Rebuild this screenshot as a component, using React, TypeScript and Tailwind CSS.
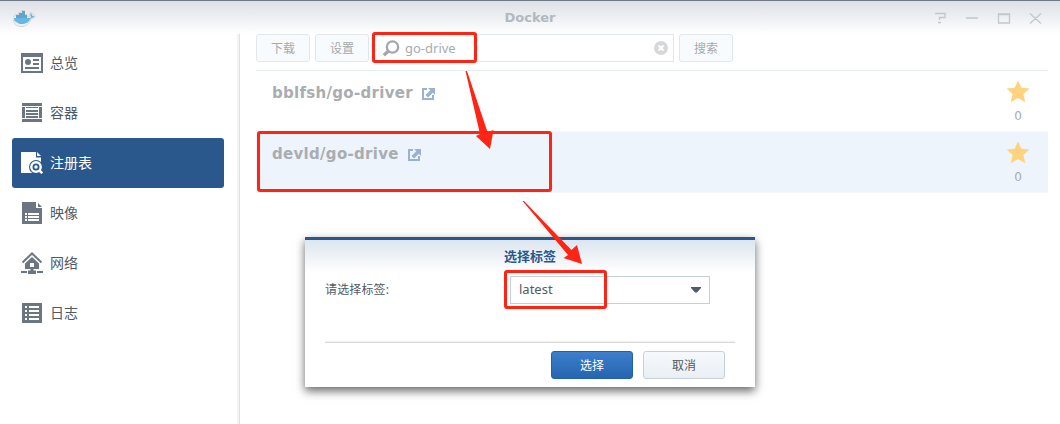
import type { ReactNode } from "react";

const latin = "font-['Noto_Sans','Noto_Sans_CJK_SC',sans-serif]";

function Whale() {
  return (
    <svg width="23" height="18" viewBox="0 0 23 18">
      <path d="M0 7.500L2 6V4.500H5.500V2.500H8V.500H11.500V4.500H14V6.500C15.500 7 16.500 7 17.400 6.200C16 4.500 16.500 3 17.800 2C19 3 19.400 4 19.500 5.200C20.800 4.800 22 5.300 22.500 6C21.500 8 20 8.500 18.500 8.500C16 14 13 16.500 8 16.500C3 16.500 0 13 0 7.500Z" fill="#f2f2f2" stroke="#d3d3d2" strokeWidth="1" />
      <path d="M1 8H15C17 8 18 7.600 18 6.500C17 5 17.200 4 18 3C19 4 19.200 5 19 6H21.500C20.800 7.500 19.500 8 18 8C16 12.500 13 14 8 14C4 14 1 12.500 1 8Z" fill="#66b7e6" />
      <path d="M3 5H14V8H3ZM6 3H12V5H6ZM9 1H12V3H9Z" fill="#62a5cc" />
      <path d="M1 11C4 12 5 13 8 15C5 15.500 2 13.500 1 11Z" fill="#e9f1f4" />
    </svg>
  );
}

function Svg({ children }: { children: ReactNode }) {
  return <svg width="22" height="22" viewBox="0 0 22 22" fill="currentColor">{children}</svg>;
}

const icons = {
  overview: (
    <Svg>
      <path d="M0 1H22V21H0ZM2 5V19H20V5Z" fillRule="evenodd" />
      <circle cx="7" cy="10" r="3" />
      <path d="M12 7H18V9H12ZM12 11H18V13H12ZM4 15H18V17H4Z" />
    </Svg>
  ),
  container: (
    <Svg>
      <path d="M1 1H21V4H1ZM1 5H4V16H1ZM18 5H21V16H18ZM5 5H17V6H5ZM5 8H17V10H5ZM5 11H17V13H5ZM5 14H17V16H5ZM1 17H21V20H1Z" />
    </Svg>
  ),
  registry: (
    <Svg>
      <path d="M0 0H15V5.500H20V21H0Z" />
      <path d="M16 0L20 4H16Z" />
      <path d="M13 21.500H22V14H17Z" fill="#2a588c" />
      <circle cx="15" cy="15" r="7" fill="#2a588c" />
      <circle cx="15" cy="15" r="4.700" fill="none" stroke="currentColor" strokeWidth="2.400" />
      <circle cx="15" cy="15" r="1.700" />
      <path d="M18.500 18.500L21.200 21.200" stroke="currentColor" strokeWidth="2.500" />
    </Svg>
  ),
  image: (
    <Svg>
      <path d="M1 0H15V6H21V22H1Z" />
      <path d="M17 1L21 5H17Z" />
      <path d="M4 11H6V13H4ZM7 11H18V13H7ZM4 14H6V16H4ZM7 14H18V16H7ZM4 17H6V19H4ZM7 17H18V19H7Z" fill="#fff" />
    </Svg>
  ),
  network: (
    <Svg>
      <path d="M1.500 10.500L11 1.500L20.500 10.500" fill="none" stroke="currentColor" strokeWidth="2" />
      <path d="M11 5L18 11.500V17H4V11.500ZM9 11V15H13V11Z" fillRule="evenodd" />
      <path d="M0 19H6V21H0ZM7 18.500H9.500V17H12.500V18.500H15V22H7ZM16 19H22V21H16Z" />
    </Svg>
  ),
  log: (
    <Svg>
      <path d="M1 1H21V21H1Z" />
      <path d="M4 4H6V6H4ZM8 4H18V6H8ZM4 8H6V10H4ZM8 8H18V10H8ZM4 12H6V14H4ZM8 12H18V14H8ZM4 16H6V18H4ZM8 16H18V18H8Z" fill="#fff" />
    </Svg>
  ),
};

const nav = [
  { label: "总览", icon: icons.overview },
  { label: "容器", icon: icons.container },
  { label: "注册表", icon: icons.registry, active: true },
  { label: "映像", icon: icons.image },
  { label: "网络", icon: icons.network },
  { label: "日志", icon: icons.log },
];

const base = "flex h-7 w-[54px] shrink-0 items-center justify-center rounded-[3px] border border-[#e2e7ec] bg-[#f8fbfe] pt-0.5 text-xs text-[#a6a9ad]";

function Row({ name, selected, children }: { name: string; selected?: boolean; children?: ReactNode }) {
  return (
    <div className={`relative flex h-[61px] justify-between border-b ${selected ? "border-[#f3f6f9] bg-[#edf4fc]" : "border-[#f6f8fa]"}`}>
      <div className="flex h-[44px] items-center pl-4">
        <span className="font-['DejaVu_Sans',sans-serif] text-[15px] font-bold tracking-[0.3px] text-[#a9adb1]">{name}</span>
        <svg className="ml-[9px] mt-0.5" width="13" height="12" viewBox="0 0 13 12" fill="#9ab1d2">
          <path d="M0 0H5V2H2V10H10V7H12V12H0Z" />
          <path d="M6 0H13V7L10.800 4.800L6 9.500L3.500 7L8.300 2.300Z" />
        </svg>
      </div>
      <div className="mr-[18px] flex w-6 flex-col items-center pt-[9px]">
        <svg width="24" height="23" viewBox="0 0 24 23">
          <path d="M12 .5L15.400 7.800L23.500 8.600L17.400 14L19.200 22.200L12 18L4.800 22.200L6.600 14L.5 8.600L8.600 7.800Z" fill="#ffd37e" />
        </svg>
        <span className="mt-[5px] font-['DejaVu_Sans',sans-serif] text-xs leading-4 text-[#a6abb0]">0</span>
      </div>
      {children}
    </div>
  );
}

export default function App() {
  return (
    <div className={`relative flex h-[424px] w-[1060px] flex-col overflow-hidden bg-white ${latin}`}>
      <header className="flex h-[34px] shrink-0 items-center border-t border-[#6f7985] bg-gradient-to-b from-[#dde0e6] to-white">
        <div className="flex w-[132px] pl-[13px] pt-[3px]"><Whale /></div>
        <h1 className="flex-1 text-center font-['DejaVu_Sans',sans-serif] text-[13px] font-bold text-[#b3b8be]">Docker</h1>
        <svg className="mr-3 w-[120px]" width="120" height="14" viewBox="0 0 120 14" fill="none" stroke="#c3c6ca" strokeWidth="1.300">
          <path d="M7 2.500H17V6.500H11.500V9M10 11.500H13M38 7H50M70.500 3.500H81.500V12H70.500ZM70 3H82M102 2.500L113 12.500M113 2.500L102 12.500" />
        </svg>
      </header>
      <div className="flex flex-1">
        <nav className="w-[240px] border-r border-[#e0e1e2] pl-3 pt-1 shadow-[inset_-2px_0_1px_#f3f3f3]">
          {nav.map((item) => (
            <div key={item.label} className={`flex h-[50px] w-[212px] items-center gap-[7px] rounded-[3px] pl-[9px] text-sm ${item.active ? "bg-[#2a588c] text-white" : "text-[#6c7682]"}`}>
              {item.icon}
              <span className={item.active ? "text-white" : "text-[#505a64]"}>{item.label}</span>
            </div>
          ))}
        </nav>
        <main className="flex-1 pl-4 pr-3">
          <div className="flex h-[37px] items-start gap-[5px] border-b border-[#e8edf2]">
            <button className={base}>下载</button>
            <button className={base}>设置</button>
            <div className="relative flex h-7 w-[300px] items-center border border-[#dfe5eb] pl-2">
              <svg className="overflow-visible" width="17" height="17" viewBox="0 0 17 17" fill="none" stroke="#a4a8ab">
                <circle cx="9.500" cy="7" r="5.700" strokeWidth="2.300" />
                <path d="M5.500 11L.8 15.200" strokeWidth="3.400" />
              </svg>
              <span className="ml-[5px] mt-px flex-1 text-[13px] text-[#a6abb0]">go-drive</span>
              <svg className="mr-[5px]" width="14" height="14" viewBox="0 0 14 14">
                <circle cx="7" cy="7" r="7" fill="#d5d7d8" />
                <path d="M4.500 4.500L9.500 9.500M9.500 4.500L4.500 9.500" stroke="#fff" strokeWidth="2" />
              </svg>
              <div className="absolute -left-[3px] -top-[3px] h-[31px] w-[105px] rounded-[3px] border-[3px] border-[#ff2414]" />
            </div>
            <button className={base}>搜索</button>
          </div>
          <Row name="bblfsh/go-driver" />
          <Row name="devld/go-drive" selected>
            <div className="absolute left-px -top-px h-[61px] w-[295px] rounded-[3px] border-[3px] border-[#ff2414]" />
          </Row>
        </main>
      </div>

      <section className="absolute left-[305px] top-[237px] flex h-[150px] w-[450px] flex-col border-t-[3px] border-[#2a588c] bg-white bg-gradient-to-b from-[#dde5ef] to-white to-[33px] px-5 shadow-[0_4px_9px_rgba(0,0,0,0.6)]">
        <h2 className="h-9 pt-1.5 text-center text-[13px] font-bold leading-5 text-[#2a588c]">选择标签</h2>
        <div className="flex h-7 items-center text-xs text-[#505a64]">
          <span className="w-[185px] tracking-[0.15px]">请选择标签:</span>
          <div className="relative flex h-7 w-[200px] items-center justify-between border border-[#c6d0dc] bg-white pl-2 pr-[7px] text-[13px]">
            latest
            <svg width="12" height="6" viewBox="0 0 12 6"><path d="M1 0H11V1L7 5.500H5L1 1Z" fill="#4f5b68" /></svg>
            <div className="absolute -left-[7px] -top-[7px] h-[39px] w-[103px] rounded-[3px] border-[3px] border-[#ff2414]" />
          </div>
        </div>
        <div className="mt-[38px] h-px shrink-0 bg-[#d9dadb] shadow-[0_-1px_1px_#eeeeee]" />
        <div className="mt-2 flex justify-end gap-2.5 pr-2.5 text-xs">
          <button className="h-7 w-[82px] rounded-[3px] border border-[#2261a7] bg-gradient-to-b from-[#3d7fcc] to-[#2564b0] pt-0.5 text-white">选择</button>
          <button className="h-7 w-[82px] rounded-[3px] border border-[#c8d0d9] bg-gradient-to-b from-[#f5f9fd] to-[#e9eff4] pt-0.5 text-[#505a64]">取消</button>
        </div>
      </section>

      <svg className="pointer-events-none absolute inset-0" width="1060" height="424" viewBox="0 0 1060 424" fill="#ff2414">
        <path d="M465.500 71L467 71L487.500 132L493.500 130L490 149L476 136L480 134Z" />
        <path d="M522.500 201H524L571.500 250L577 245L582 264L563.500 258L568 255Z" />
      </svg>
    </div>
  );
}
